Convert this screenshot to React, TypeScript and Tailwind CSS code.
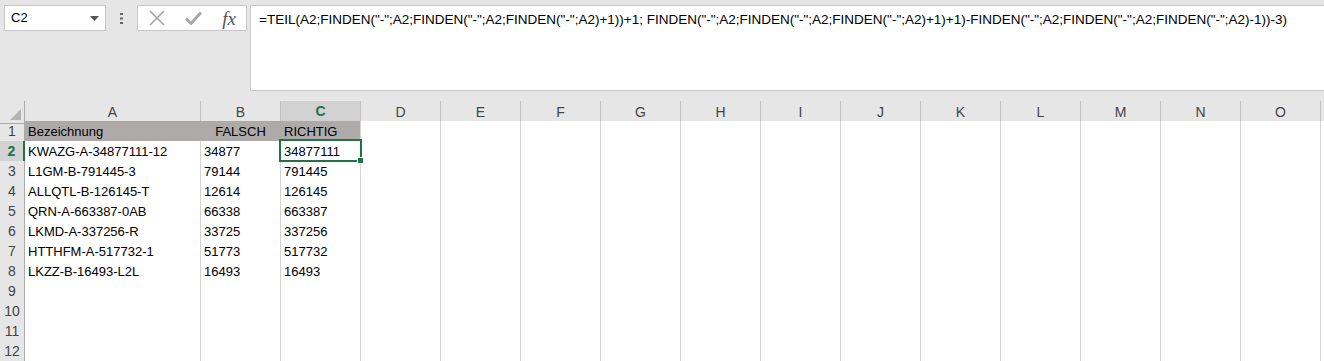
import React from 'react';

const formula =
  '=TEIL(A2;FINDEN("-";A2;FINDEN("-";A2;FINDEN("-";A2)+1))+1; FINDEN("-";A2;FINDEN("-";A2;FINDEN("-";A2)+1)+1)-FINDEN("-";A2;FINDEN("-";A2;FINDEN("-";A2)-1))-3)';

const cols = ['A', 'B', 'C', 'D', 'E', 'F', 'G', 'H', 'I', 'J', 'K', 'L', 'M', 'N', 'O', 'P'];

const data: string[][] = [
  ['Bezeichnung', 'FALSCH', 'RICHTIG'],
  ['KWAZG-A-34877111-12', '34877', '34877111'],
  ['L1GM-B-791445-3', '79144', '791445'],
  ['ALLQTL-B-126145-T', '12614', '126145'],
  ['QRN-A-663387-0AB', '66338', '663387'],
  ['LKMD-A-337256-R', '33725', '337256'],
  ['HTTHFM-A-517732-1', '51773', '517732'],
  ['LKZZ-B-16493-L2L', '16493', '16493'],
];

const font = { fontFamily: '"Liberation Sans", Arial, sans-serif' };

function FormulaBar() {
  return (
    <div className="h-[101px] bg-[#e6e6e6] flex items-start pt-[5px] pl-[4px]">
      <div className="w-[102px] h-[26px] bg-white border border-[#c6c6c6] flex items-center pl-[6px] pr-[6px] text-[13px] text-black">
        <span className="flex-1">C2</span>
        <svg width="9" height="5" viewBox="0 0 9 5">
          <path d="M0 0 L9 0 L4.5 5 Z" fill="#555" />
        </svg>
      </div>
      <div className="w-[31px] h-[26px] flex items-center justify-center">
        <svg width="3" height="11" viewBox="0 0 3 11">
          <rect x="0" y="0" width="3" height="2" fill="#666" />
          <rect x="0" y="4.5" width="3" height="2" fill="#666" />
          <rect x="0" y="9" width="3" height="2" fill="#666" />
        </svg>
      </div>
      <div className="w-[110px] h-[26px] bg-white border border-[#c6c6c6] flex items-center">
        <div className="w-[37px] flex justify-center">
          <svg width="16" height="16" viewBox="0 0 16 16">
            <path d="M1 1 L15 15 M15 1 L1 15" stroke="#a6a6a6" strokeWidth="1.6" />
          </svg>
        </div>
        <div className="w-[37px] flex justify-center">
          <svg width="17" height="14" viewBox="0 0 17 14">
            <path d="M1 7.5 L6 12.5 L16 1.5" stroke="#a6a6a6" strokeWidth="2.8" fill="none" />
          </svg>
        </div>
        <div
          className="w-[34px] flex justify-center text-[19px] italic text-[#555] leading-none"
          style={{ fontFamily: '"Liberation Serif", "Times New Roman", serif' }}
        >
          fx
        </div>
      </div>
      <div className="ml-[3px] flex-1 h-[86px] bg-white border-l border-t border-b border-[#c6c6c6] pl-[8px] pt-[4px] text-[13.5px] text-black whitespace-nowrap overflow-hidden">
        {formula}
      </div>
    </div>
  );
}

function HeaderRow() {
  return (
    <div className="grid grid-cols-[25px_176px_repeat(13,80px)_80px] h-[20px] bg-[#e6e6e6] text-[14px] text-[#444]">
      <div className="relative border-r border-b border-[#ababab]">
        <svg className="absolute right-[3px] bottom-[3px]" width="11" height="11" viewBox="0 0 11 11">
          <path d="M11 0 L11 11 L0 11 Z" fill="#b4b4b4" />
        </svg>
      </div>
      {cols.map((c) => {
        const sel = c === 'C';
        return (
          <div
            key={c}
            className={
              sel
                ? 'flex items-center justify-center bg-[#d2d2d2] text-[#217346] font-bold border-r border-[#c0c0c0] border-b-2 border-b-[#217346]'
                : 'flex items-center justify-center border-r border-[#c0c0c0] border-b border-b-[#ababab]'
            }
          >
            {c}
          </div>
        );
      })}
    </div>
  );
}

function Row({ n }: { n: number }) {
  const vals = data[n - 1] || [];
  const sel = n === 2;
  const head = n === 1;
  return (
    <div className="grid grid-cols-[25px_176px_repeat(13,80px)_80px] h-[20px] text-[13px] text-black">
      <div
        className={
          sel
            ? 'flex items-center justify-center bg-[#d2d2d2] text-[#217346] font-bold text-[14px] border-r-2 border-r-[#217346] border-b border-b-[#c0c0c0]'
            : 'flex items-center justify-center bg-[#e6e6e6] text-[#444] text-[14px] border-r border-r-[#ababab] border-b border-b-[#c0c0c0]'
        }
      >
        {n}
      </div>
      {cols.map((c, i) => {
        const v = vals[i] || '';
        const filled = head && i < 3;
        return (
          <div
            key={c}
            className={
              (filled
                ? 'bg-[#aeaaaa] border-b border-b-[#d4d4d4] border-r ' + (i < 2 ? 'border-r-[#aeaaaa]' : 'border-r-[#d4d4d4]')
                : 'bg-white border-r border-b border-[#d4d4d4]') +
              ' flex items-end pb-[1px] px-[3px] overflow-hidden whitespace-nowrap' +
              (head && i === 1 ? ' justify-center' : '')
            }
          >
            {v}
          </div>
        );
      })}
    </div>
  );
}

export default function App() {
  return (
    <div className="w-[1324px] h-[361px] overflow-hidden bg-white relative" style={font}>
      <FormulaBar />
      <HeaderRow />
      {Array.from({ length: 12 }, (_, i) => (
        <Row key={i} n={i + 1} />
      ))}
      {/* selection box C2 */}
      <div className="absolute left-[279px] top-[139px] w-[83px] h-[23px] border-2 border-[#217346] pointer-events-none" />
      <div className="absolute left-[357px] top-[157px] w-[7px] h-[7px] bg-[#217346] border border-white" />
    </div>
  );
}
